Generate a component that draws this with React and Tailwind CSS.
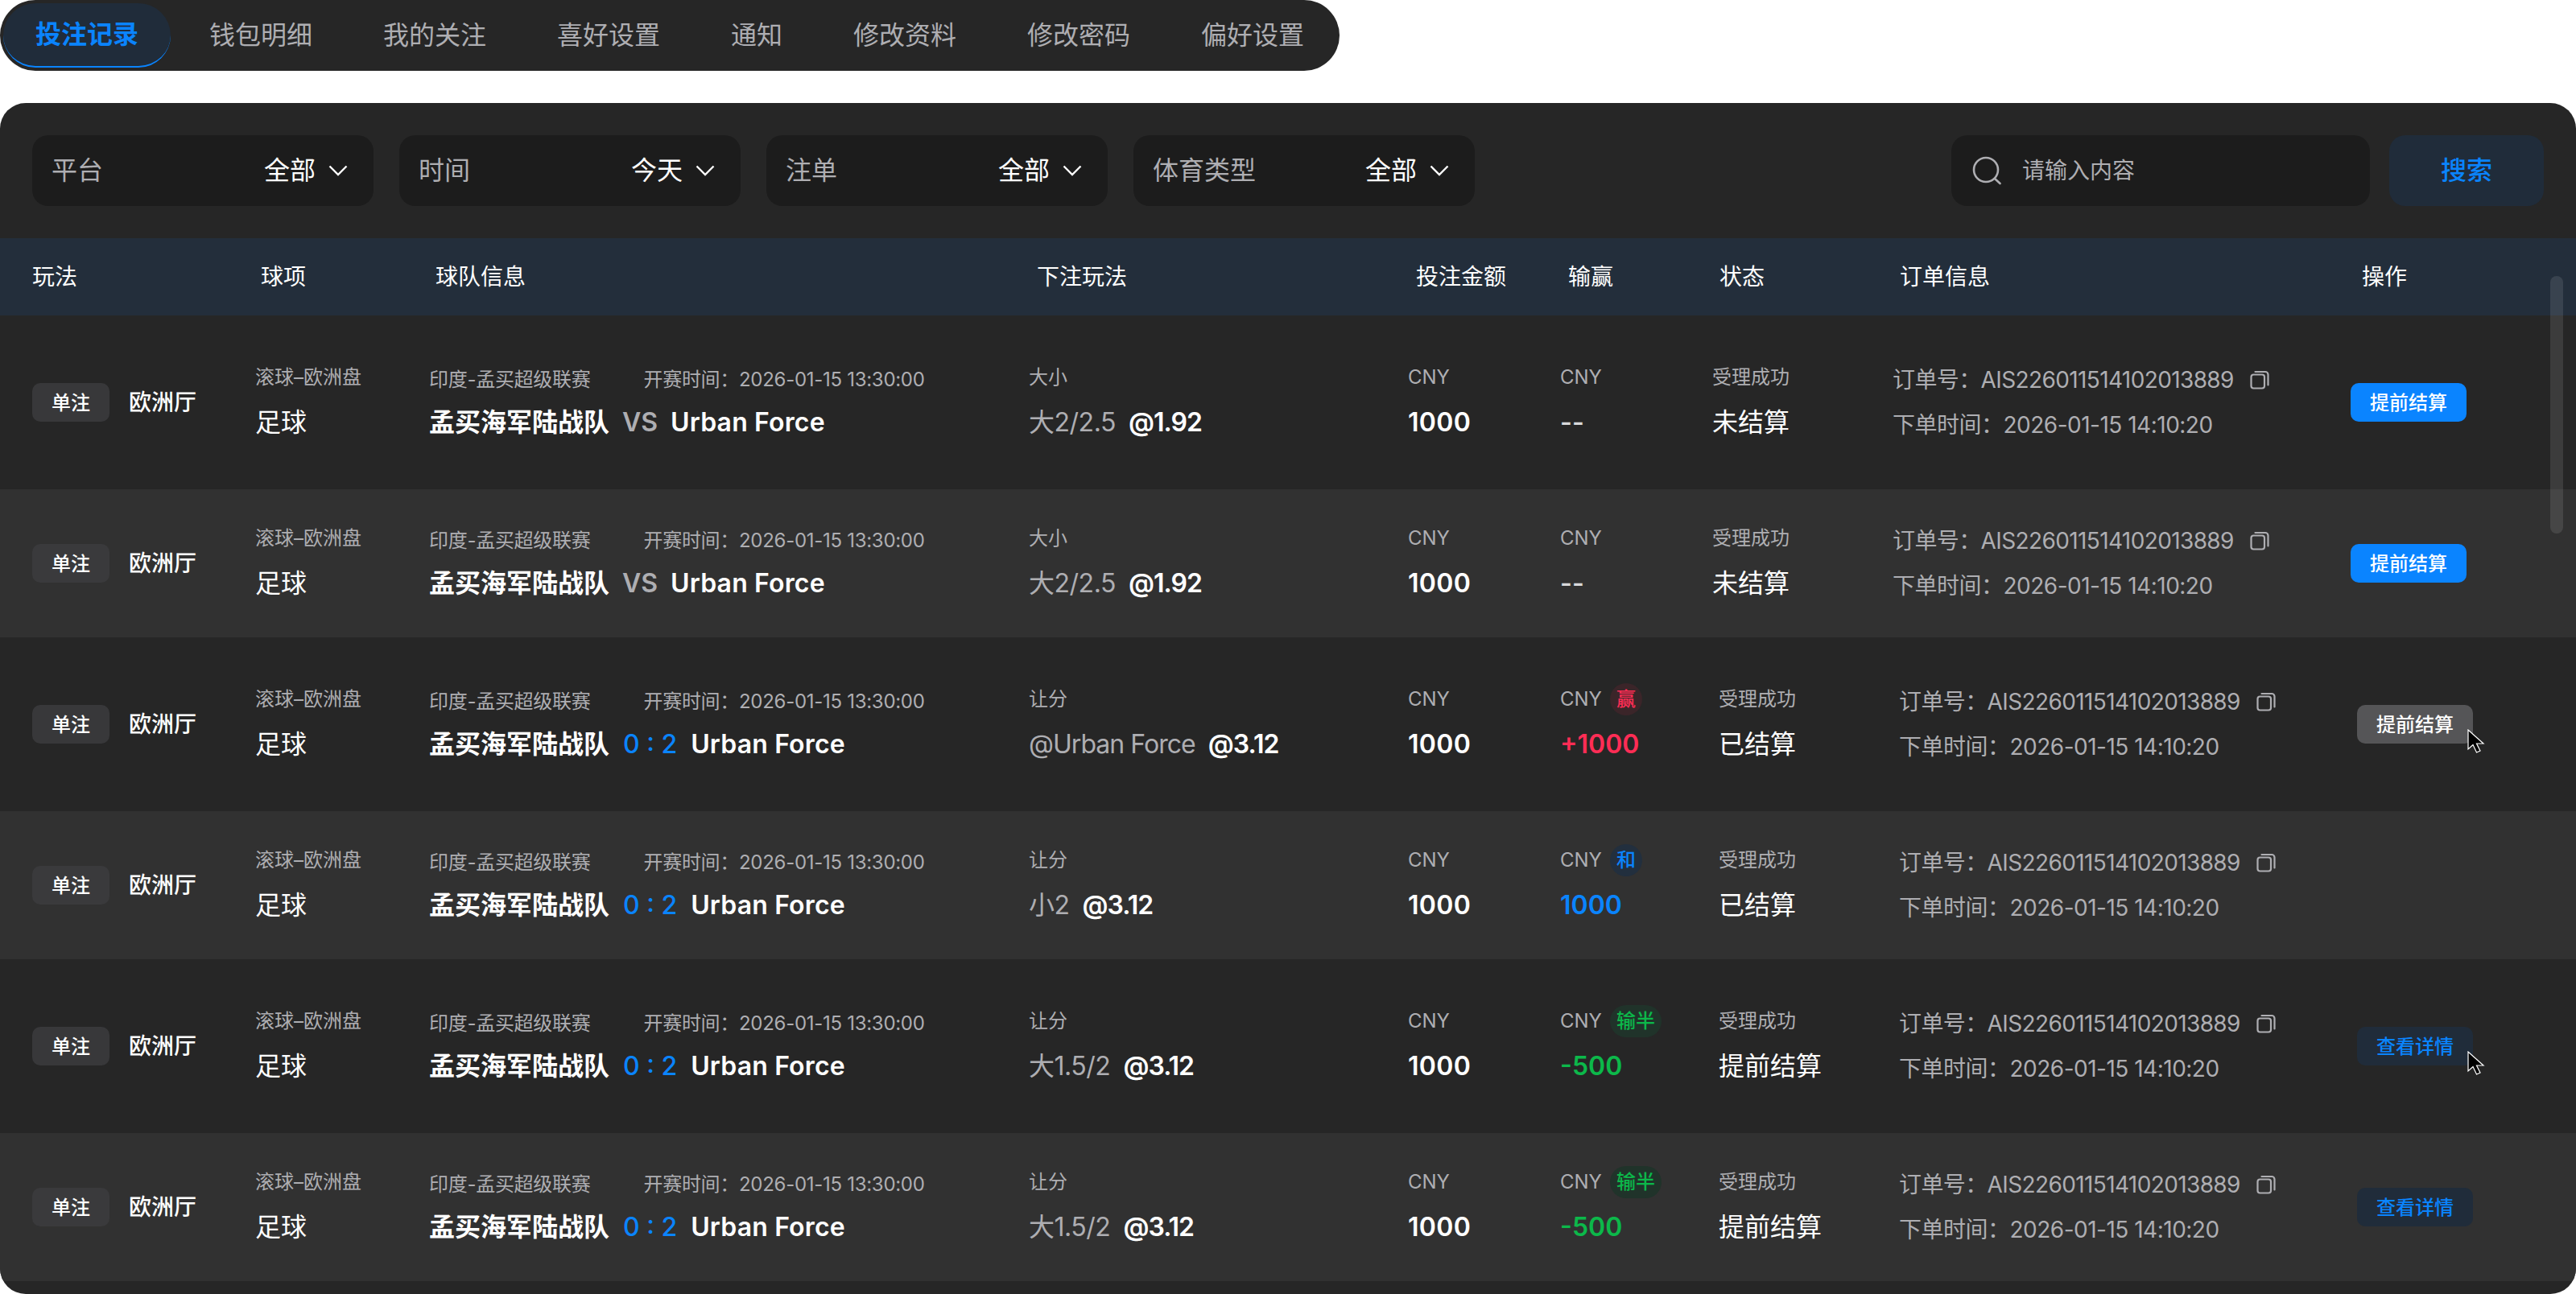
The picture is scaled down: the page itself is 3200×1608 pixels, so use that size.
const font = { fontFamily: 'Inter, "Noto Sans CJK SC", sans-serif' }

const tabs = ['投注记录', '钱包明细', '我的关注', '喜好设置', '通知', '修改资料', '修改密码', '偏好设置']
const filters = [
  { label: '平台', value: '全部' },
  { label: '时间', value: '今天' },
  { label: '注单', value: '全部' },
  { label: '体育类型', value: '全部' },
]
const headers = ['玩法', '球项', '球队信息', '下注玩法', '投注金额', '输赢', '状态', '订单信息', '操作']

const rows = [
  { score: 'VS', pickLabel: '大小', pick: '大2/2.5', odds: '@1.92', result: '--', status: '受理成功', settle: '未结算', action: 'blue' },
  { score: 'VS', pickLabel: '大小', pick: '大2/2.5', odds: '@1.92', result: '--', status: '受理成功', settle: '未结算', action: 'blue' },
  { score: '0 : 2', pickLabel: '让分', pick: '@Urban Force', odds: '@3.12', result: '+1000', tone: 'red', badge: '赢', status: '受理成功', settle: '已结算', action: 'gray', cursor: true, shifted: true },
  { score: '0 : 2', pickLabel: '让分', pick: '小2', odds: '@3.12', result: '1000', tone: 'blue', badge: '和', status: '受理成功', settle: '已结算', shifted: true },
  { score: '0 : 2', pickLabel: '让分', pick: '大1.5/2', odds: '@3.12', result: '-500', tone: 'green', badge: '输半', status: '受理成功', settle: '提前结算', action: 'detail', cursor: true, shifted: true },
  { score: '0 : 2', pickLabel: '让分', pick: '大1.5/2', odds: '@3.12', result: '-500', tone: 'green', badge: '输半', status: '受理成功', settle: '提前结算', action: 'detail', shifted: true },
]

const toneText = { red: 'text-[#ff2d55]', blue: 'text-[#0a84ff]', green: 'text-[#0cb84a]' }
const toneBadge = { red: 'bg-[#3b2529]', blue: 'bg-[#222f3e]', green: 'bg-[#20332a]' }

function Chevron() {
  return (
    <svg width="24" height="14" viewBox="0 0 24 14" fill="none" className="shrink-0">
      <path d="M1.5 1.5 12 12 22.5 1.5" stroke="#fff" strokeWidth="2.4" />
    </svg>
  )
}

function SearchIcon() {
  return (
    <svg width="36" height="36" viewBox="0 0 36 36" fill="none" className="shrink-0">
      <circle cx="17" cy="17" r="15" stroke="#aeaeb2" strokeWidth="2.6" />
      <path d="M28 28l6.5 6" stroke="#aeaeb2" strokeWidth="2.6" strokeLinecap="round" />
    </svg>
  )
}

function CopyIcon() {
  return (
    <svg width="24" height="24" viewBox="0 0 24 24" fill="none" className="shrink-0">
      <rect x="1.5" y="5.5" width="16.5" height="17" rx="3" stroke="#aeaeb2" strokeWidth="2.2" />
      <path d="M6.5 2h12.5a3.5 3.5 0 0 1 3.5 3.5v13" stroke="#aeaeb2" strokeWidth="2.2" strokeLinecap="round" />
    </svg>
  )
}

function Cursor() {
  return (
    <svg width="22" height="30" viewBox="0 0 22 30" className="absolute left-[137px] top-[30px]">
      <path d="M1 1v24l6-5.5 4.5 9.5 4.5-2-4.5-9h8.5z" fill="#000" stroke="#fff" strokeWidth="1.2" />
    </svg>
  )
}

function ActionButton({ kind, cursor }) {
  if (!kind) return null
  const color = {
    blue: 'bg-[#0a84ff] text-white',
    gray: 'bg-[#555557] text-white',
    detail: 'bg-[#202c3a] text-[#0a84ff]',
  }[kind]
  return (
    <div className="relative w-[144px]">
      <button type="button" className={`h-[48px] w-[144px] rounded-[10px] pt-[2px] text-[24px] font-medium ${color}`}>
        {kind === 'detail' ? '查看详情' : '提前结算'}
      </button>
      {cursor && <Cursor />}
    </div>
  )
}

function Row({ row, index }) {
  const odd = index % 2 === 0
  const cols = row.shifted
    ? 'grid-cols-[277px_216px_745px_471px_189px_197px_224px_569px_1fr]'
    : 'grid-cols-[277px_216px_745px_471px_189px_189px_224px_569px_1fr]'
  return (
    <div className={`grid ${cols} items-center pl-[40px] ${odd ? 'h-[216px]' : 'h-[184px] bg-[#313131]'}`}>
      <div className="flex items-center gap-[24px]">
        <span className={`flex h-[48px] w-[96px] items-center justify-center rounded-[10px] pt-[2px] text-[24px] font-medium text-white ${odd ? 'bg-[#38383a]' : 'bg-[#3a3a3c]'}`}>单注</span>
        <span className="text-[28px] font-medium text-white">欧洲厅</span>
      </div>

      <div className="flex flex-col gap-[18px]">
        <div className="flex h-[32px] items-center text-[24px] text-[#aeaeb2]">滚球–欧洲盘</div>
        <div className="flex h-[44px] items-center text-[32px] text-white">足球</div>
      </div>

      <div className="flex flex-col gap-[18px]">
        <div className="flex h-[32px] items-center gap-[66px] pt-[6px] text-[24px] tracking-[-0.012em] text-[#aeaeb2]">
          <span>印度-孟买超级联赛</span>
          <span>开赛时间：2026-01-15 13:30:00</span>
        </div>
        <div className={`flex h-[44px] items-center text-[32px] font-semibold text-white ${row.score === 'VS' ? 'gap-[16px]' : 'gap-[17px]'}`}>
          <span>孟买海军陆战队</span>
          <span className={row.score === 'VS' ? 'text-[#aeaeb2]' : 'font-medium text-[#0a84ff]'}>{row.score}</span>
          <span className="tracking-[0.005em]">Urban Force</span>
        </div>
      </div>

      <div className="flex flex-col gap-[18px]">
        <div className="flex h-[32px] items-center text-[24px] text-[#aeaeb2]">{row.pickLabel}</div>
        <div className="flex h-[44px] items-center gap-[16px] text-[32px]">
          <span className={`text-[#aeaeb2] ${row.pick.startsWith('@') ? 'tracking-[-0.03em]' : 'tracking-[-0.015em]'}`}>{row.pick}</span>
          <span className="font-semibold tracking-[-0.03em] text-white">{row.odds}</span>
        </div>
      </div>

      <div className="flex flex-col gap-[18px]">
        <div className="flex h-[32px] items-center text-[24px] text-[#aeaeb2]">CNY</div>
        <div className="flex h-[44px] items-center text-[32px] font-semibold tracking-[0.01em] text-white">1000</div>
      </div>

      <div className="flex flex-col gap-[18px]">
        <div className="flex h-[32px] items-center gap-[12px] text-[24px] text-[#aeaeb2]">
          <span>CNY</span>
          {row.badge && (
            <span className={`-ml-[2px] flex h-[40px] min-w-[40px] items-center justify-center rounded-full px-[8px] font-medium ${toneBadge[row.tone]} ${toneText[row.tone]}`}>{row.badge}</span>
          )}
        </div>
        <div className={`flex h-[44px] items-center text-[32px] font-semibold ${row.tone ? toneText[row.tone] : 'text-[#d8d8da]'}`}>{row.result}</div>
      </div>

      <div className="flex flex-col gap-[18px]">
        <div className="flex h-[32px] items-center text-[24px] text-[#aeaeb2]">{row.status}</div>
        <div className="flex h-[44px] items-center text-[32px] text-white">{row.settle}</div>
      </div>

      <div className="flex flex-col gap-[16px] text-[28px] text-[#aeaeb2]">
        <div className="flex h-[40px] items-center gap-[20px]">
          <span className="tracking-[-0.022em]">订单号：AIS226011514102013889</span>
          <CopyIcon />
        </div>
        <div className="flex h-[40px] items-center tracking-[-0.018em]">下单时间：2026-01-15 14:10:20</div>
      </div>

      <div>
        <ActionButton kind={row.action} cursor={row.cursor} />
      </div>
    </div>
  )
}

export default function App() {
  return (
    <div className="h-[1608px] w-[3200px] overflow-hidden bg-white" style={font}>
      <div className="flex h-[88px] w-[1664px] items-center rounded-full bg-[#262626]">
        {tabs.map((t, i) => (
          <div
            key={i}
            className={i === 0
              ? 'ml-[4px] mr-[4px] flex h-[80px] w-[208px] items-center justify-center rounded-full border-b-2 border-[#0a84ff] bg-[#202c3a] text-[32px] font-semibold text-[#0a84ff]'
              : 'flex h-[80px] items-center px-[44px] text-[32px] text-[#aeaeb2]'}
          >
            {t}
          </div>
        ))}
      </div>

      <div className="relative mt-[40px] h-[1480px] overflow-hidden rounded-[32px] bg-[#262626]">
        <div className="flex h-[168px] items-center px-[40px]">
          <div className="flex gap-[32px]">
            {filters.map((f) => (
              <div key={f.label} className="flex h-[88px] w-[424px] items-center justify-between rounded-[20px] bg-[#1c1c1c] pl-[24px] pr-[32px] text-[32px]">
                <span className="text-[#aeaeb2]">{f.label}</span>
                <span className="flex items-center gap-[16px] text-white">{f.value}<Chevron /></span>
              </div>
            ))}
          </div>
          <div className="ml-auto flex gap-[24px]">
            <div className="flex h-[88px] w-[520px] items-center gap-[26px] rounded-[20px] bg-[#1c1c1c] pl-[26px] text-[28px] text-[#aeaeb2]">
              <SearchIcon />
              <span>请输入内容</span>
            </div>
            <button type="button" className="h-[88px] w-[192px] rounded-[20px] bg-[#202c3a] text-[32px] font-medium text-[#0a84ff]">搜索</button>
          </div>
        </div>

        <div className="grid h-[96px] grid-cols-[284px_217px_747px_471px_189px_188px_224px_574px_1fr] items-center bg-[#232e3b] pl-[40px] text-[28px] text-white">
          {headers.map((h) => <span key={h}>{h}</span>)}
        </div>

        {rows.map((row, i) => <Row key={i} row={row} index={i} />)}

        <div className="absolute left-[3168px] top-[215px] h-[320px] w-[16px] rounded-full bg-white/10" />
      </div>
    </div>
  )
}
